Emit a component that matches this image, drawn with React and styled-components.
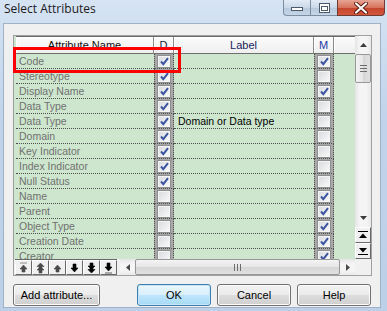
import React from 'react'
import styled, { createGlobalStyle } from 'styled-components';

const rows = [
    { name: 'Code', d: true, label: '', m: true },
    { name: 'Stereotype', d: true, label: '', m: false },
    { name: 'Display Name', d: true, label: '', m: true },
    { name: 'Data Type', d: true, label: '', m: false },
    { name: 'Data Type', d: true, label: 'Domain or Data type', m: false },
    { name: 'Domain', d: true, label: '', m: false },
    { name: 'Key Indicator', d: true, label: '', m: false },
    { name: 'Index Indicator', d: true, label: '', m: false },
    { name: 'Null Status', d: true, label: '', m: false },
    { name: 'Name', d: false, label: '', m: true },
    { name: 'Parent', d: false, label: '', m: true },
    { name: 'Object Type', d: false, label: '', m: true },
    { name: 'Creation Date', d: false, label: '', m: true },
    { name: 'Creator', d: false, label: '', m: true },
];

const navIcons = [
    { d: 'M1 1h7M4.5 3L1 7h2v3h3V7h2z', dim: true },
    { d: 'M4.5 1L1 4.5h2V6L1 8h2v3h3V8h2L6 6V4.5h2z', dim: true },
    { d: 'M4.5 3L1 7h2v3h3V7h2z', dim: true },
    { d: 'M4.5 10L1 6h2V2h3v4h2z', dim: false },
    { d: 'M4.5 11L1 7.5h2V6L1 4h2V1h3v3h2L6 6v1.5h2z', dim: false },
    { d: 'M1 11h7M4.5 9L1 5h2V1h3v4h2z', dim: false },
];

const Check = ({ on }) => (
    <CheckBox>
        {on && (
            <svg width="11" height="11" viewBox="0 0 11 11">
                <path d="M2 5.5l2.3 2.6L9 2.2" fill="none" stroke="#3b54a0" strokeWidth="2" />
            </svg>
        )}
    </CheckBox>
)

export default function App() {
    return (
        <>
            <GlobalStyle />
            <Window>
                <TitleBar>
                    <Title>Select Attributes</Title>
                    <Controls>
                        <CtrlBtn>
                            <svg width="12" height="5" viewBox="0 0 12 5">
                                <rect x="0.5" y="0.5" width="11" height="3" fill="#fff" stroke="#4d5a6b" />
                            </svg>
                        </CtrlBtn>
                        <CtrlBtn>
                            <svg width="11" height="10" viewBox="0 0 11 10">
                                <rect x="0.5" y="0.5" width="10" height="9" fill="#fff" stroke="#4d5a6b" />
                                <rect x="2.5" y="3.5" width="6" height="4" fill="none" stroke="#4d5a6b" />
                            </svg>
                        </CtrlBtn>
                        <CloseBtn>
                            <svg width="14" height="12" viewBox="0 0 14 12">
                                <path d="M2 1.5l10 9M12 1.5l-10 9" stroke="#5a1a10" strokeWidth="4" strokeLinecap="round" />
                                <path d="M2 1.5l10 9M12 1.5l-10 9" stroke="#fff" strokeWidth="2.2" strokeLinecap="round" />
                            </svg>
                        </CloseBtn>
                    </Controls>
                </TitleBar>
                <Client>
                    <Grid>
                        <Table>
                            <HeaderRow>
                                <HeadCell>Attribute Name</HeadCell>
                                <HeadCell $color="#1c1c3c">D</HeadCell>
                                <HeadCell $color="#141c5c">Label</HeadCell>
                                <HeadCell $color="#1a3aa8">M</HeadCell>
                                <HeadCell />
                            </HeaderRow>
                            {rows.map((r, i) => (
                                <Row key={i}>
                                    <NameCell>{r.name}</NameCell>
                                    <BoxCell><Check on={r.d} /></BoxCell>
                                    <LabelCell>{r.label}</LabelCell>
                                    <BoxCell><Check on={r.m} /></BoxCell>
                                    <FillCell />
                                </Row>
                            ))}
                        </Table>
                        <VScroll>
                            <Arrow>
                                <svg width="7" height="4" viewBox="0 0 7 4"><path d="M0 4L3.5 0L7 4z" fill="#3a3a3a" /></svg>
                            </Arrow>
                            <VThumb>
                                <svg width="7" height="7" viewBox="0 0 7 7">
                                    <path d="M0 0.5h7M0 3.5h7M0 6.5h7" stroke="#6c6c6c" />
                                </svg>
                            </VThumb>
                            <Track />
                            <Arrow>
                                <svg width="7" height="4" viewBox="0 0 7 4"><path d="M0 0L3.5 4L7 0z" fill="#3a3a3a" /></svg>
                            </Arrow>
                            <JumpBtn>
                                <svg width="10" height="8" viewBox="0 0 10 8">
                                    <path d="M0 0.5h10" stroke="#000" />
                                    <path d="M1 7L5 2.5L9 7z" fill="#000" />
                                </svg>
                            </JumpBtn>
                            <JumpBtn>
                                <svg width="10" height="8" viewBox="0 0 10 8">
                                    <path d="M1 1L5 5.5L9 1z" fill="#000" />
                                    <path d="M0 7.5h10" stroke="#000" />
                                </svg>
                            </JumpBtn>
                        </VScroll>
                        <BottomBar>
                            <NavGroup>
                                {navIcons.map((n, i) => (
                                    <NavBtn key={i}>
                                        <svg width="9" height="12" viewBox="0 0 9 12">
                                            <path d={n.d} fill={n.dim ? '#4a4a4a' : '#000'} stroke={n.dim ? '#4a4a4a' : '#000'} strokeWidth="0.6" />
                                        </svg>
                                    </NavBtn>
                                ))}
                            </NavGroup>
                            <HScroll>
                                <HArrow>
                                    <svg width="4" height="7" viewBox="0 0 4 7"><path d="M4 0L0 3.5L4 7z" fill="#4a4a4a" /></svg>
                                </HArrow>
                                <HThumb>
                                    <svg width="7" height="7" viewBox="0 0 7 7">
                                        <path d="M0.5 0v7M3.5 0v7M6.5 0v7" stroke="#6c6c6c" />
                                    </svg>
                                </HThumb>
                                <HArrow>
                                    <svg width="4" height="7" viewBox="0 0 4 7"><path d="M0 0L4 3.5L0 7z" fill="#4a4a4a" /></svg>
                                </HArrow>
                            </HScroll>
                        </BottomBar>
                        <Corner />
                    </Grid>
                    <ButtonRow>
                        <Button $w="87px">Add attribute...</Button>
                        <Spacer />
                        <Button $primary>OK</Button>
                        <Button>Cancel</Button>
                        <Button>Help</Button>
                    </ButtonRow>
                </Client>
                <Marker />
            </Window>
        </>
    )
}

const GlobalStyle = createGlobalStyle`
body {
    margin: 0;
    background: #fff;
}
`;
const Window = styled.div`
position: relative;
width: 387px;
height: 311px;
background: linear-gradient(#d5e3f3, #c0d3ea 40%, #bcd0e8);
display: flex;
flex-direction: column;
box-sizing: border-box;
`;
const TitleBar = styled.div`
height: 23px;
display: flex;
align-items: flex-start;
padding-left: 4px;
`;
const Title = styled.div`
font-family: "Open Sans", "Noto Sans", sans-serif;
font-size: 12px;
line-height: 17px;
color: #1b1b1b;
`;
const Controls = styled.div`
margin-left: auto;
margin-right: 2px;
display: flex;
height: 16px;
`;
const CtrlBtn = styled.div`
width: 27px;
height: 16px;
box-sizing: border-box;
border: 1px solid #7d8ea3;
border-top: none;
border-right: none;
background: linear-gradient(#e3ebf5, #cad8e8 50%, #b7c8dc 51%, #c6d6e8);
display: flex;
align-items: center;
justify-content: center;
&:first-child {
    border-bottom-left-radius: 4px;
    align-items: flex-end;
    padding-bottom: 3px;
}
`;
const CloseBtn = styled.div`
width: 48px;
height: 16px;
box-sizing: border-box;
border: 1px solid #6f3a32;
border-top: none;
border-bottom-right-radius: 4px;
background: linear-gradient(#e8a493, #d6735d 50%, #c4432b 51%, #d2583e);
display: flex;
align-items: center;
justify-content: center;
`;
const Client = styled.div`
flex: 1;
margin: 0 6px 3px 3px;
background: #f0f0f0;
border: 1px solid #9fb1c6;
padding: 11px 9px 0 9px;
display: flex;
flex-direction: column;
`;
const Grid = styled.div`
width: 359px;
height: 241px;
box-sizing: border-box;
border: 1px solid #a0a0a0;
box-shadow: inset 1px 1px 0 #696969;
display: grid;
grid-template-columns: 1fr 16px;
grid-template-rows: 1fr 16px;
overflow: hidden;
background: #f0f0f0;
`;
const Table = styled.div`
padding-left: 2px;
overflow: hidden;
background: #cde6cd;
font-family: "Liberation Sans", Arial, sans-serif;
font-size: 10.5px;
`;
const HeaderRow = styled.div`
display: grid;
grid-template-columns: 138px 20px 140px 20px 1fr;
height: 18px;
background: #f0f0f0;
border-top: 1px solid #696969;
box-sizing: border-box;
`;
const HeadCell = styled.div`
display: flex;
align-items: center;
justify-content: center;
color: ${p => p.$color || '#111'};
font-size: 11px;
background: linear-gradient(#fbfbfb, #efefef);
border-right: 1px solid #8c8c8c;
border-bottom: 1px solid #6e6e6e;
box-shadow: inset 1px 1px 0 #fff;
&:last-child {
    border-right: none;
}
`;
const Row = styled.div`
display: grid;
grid-template-columns: 138px 20px 140px 20px 1fr;
height: 15px;
`;
const NameCell = styled.div`
color: #717171;
padding-left: 3px;
line-height: 14px;
border-bottom: 1px dotted #4e4e4e;
white-space: nowrap;
`;
const LabelCell = styled(NameCell)`
color: #000;
padding-left: 4px;
`;
const BoxCell = styled.div`
display: flex;
align-items: center;
justify-content: center;
border-left: 1px dotted #4e4e4e;
border-right: 1px dotted #4e4e4e;
border-bottom: 1px dotted #4e4e4e;
background: #a8a8a8;
box-sizing: border-box;
`;
const FillCell = styled.div``;
const CheckBox = styled.div`
width: 14px;
height: 13px;
box-sizing: border-box;
border: 1px solid #8e8f8f;
background: linear-gradient(135deg, #d7d9dd, #fbfbfb);
box-shadow: inset 0 0 0 1px #f4f4f4;
display: flex;
align-items: center;
justify-content: center;
`;
const VScroll = styled.div`
display: flex;
flex-direction: column;
background: linear-gradient(90deg, #e4e4e4, #f5f5f5 30%, #f5f5f5 70%, #e9e9e9);
`;
const Arrow = styled.div`
height: 18px;
display: flex;
align-items: center;
justify-content: center;
`;
const VThumb = styled.div`
height: 29px;
box-sizing: border-box;
border: 1px solid #979797;
border-radius: 2px;
background: linear-gradient(90deg, #f3f3f3, #e6e6e6 50%, #d6d6d6 51%, #e1e1e1);
display: flex;
align-items: center;
justify-content: center;
`;
const Track = styled.div`
flex: 1;
`;
const JumpBtn = styled.div`
height: 16px;
box-sizing: border-box;
background: #f0f0f0;
border: 1px solid;
border-color: #fff #696969 #696969 #fff;
display: flex;
align-items: center;
justify-content: center;
`;
const BottomBar = styled.div`
display: flex;
align-items: stretch;
background: #f0f0f0;
`;
const NavGroup = styled.div`
display: flex;
margin-left: 1px;
border-top: 1px solid #696969;
`;
const NavBtn = styled.div`
width: 17px;
box-sizing: border-box;
background: #f0f0f0;
border: 1px solid;
border-color: #fff #696969 #696969 #fff;
display: flex;
align-items: center;
justify-content: center;
`;
const HScroll = styled.div`
flex: 1;
margin-left: 3px;
display: flex;
align-items: stretch;
background: linear-gradient(#e4e4e4, #f5f5f5 30%, #f5f5f5 70%, #e9e9e9);
`;
const HArrow = styled.div`
width: 15px;
display: flex;
align-items: center;
justify-content: center;
`;
const HThumb = styled.div`
flex: 1;
box-sizing: border-box;
border: 1px solid #979797;
border-radius: 2px;
background: linear-gradient(#f3f3f3, #e6e6e6 50%, #d6d6d6 51%, #e1e1e1);
display: flex;
align-items: center;
justify-content: center;
`;
const Corner = styled.div`
background: #f0f0f0;
`;
const ButtonRow = styled.div`
display: flex;
gap: 6px;
margin-top: 8px;
`;
const Spacer = styled.div`
flex: 1;
`;
const Button = styled.div`
width: ${p => p.$w || '74px'};
height: 22px;
box-sizing: border-box;
border: 1px solid ${p => p.$primary ? '#3c7fb1' : '#707070'};
border-radius: 3px;
background: ${p => p.$primary
    ? 'linear-gradient(#eaf6fd, #d9f0fc 50%, #bee6fd 51%, #a7d9f5)'
    : 'linear-gradient(#f2f2f2, #ebebeb 50%, #dddddd 51%, #cfcfcf)'};
box-shadow: inset 0 0 0 1px ${p => p.$primary ? '#c6e6f8' : '#fcfcfc'};
font-family: "Liberation Sans", Arial, sans-serif;
font-size: 11px;
color: #000;
display: flex;
align-items: center;
justify-content: center;
`;
const Marker = styled.div`
position: absolute;
left: 13px;
top: 47px;
width: 168px;
height: 26px;
box-sizing: border-box;
border: 3px solid #ff0000;
pointer-events: none;
`;
